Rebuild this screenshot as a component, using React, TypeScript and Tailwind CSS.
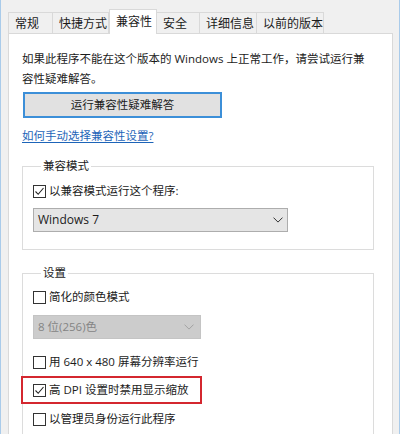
const tabs = [
  { label: "常规", w: "w-[45px]" },
  { label: "快捷方式", w: "w-[57px]" },
  { label: "兼容性", w: "w-[48px]", active: true },
  { label: "安全", w: "w-[44px]" },
  { label: "详细信息", w: "w-[58px]" },
  { label: "以前的版本", w: "w-[68px]" },
];

const CheckBox = ({ checked }: { checked?: boolean }) => (
  <span className="flex h-[13px] w-[13px] shrink-0 items-center justify-center border border-[#333333] bg-white">
    {checked && (
      <svg width="11" height="11" viewBox="0 0 11 11">
        <polyline
          points="1.5,5.5 4.2,8.3 9.5,2"
          fill="none"
          stroke="#222222"
          strokeWidth="1.1"
        />
      </svg>
    )}
  </span>
);

const CheckRow = ({ label, checked }: { label: string; checked?: boolean }) => (
  <div className="flex h-[20px] items-center gap-x-[3px]">
    <CheckBox checked={checked} />
    <span>{label}</span>
  </div>
);

const Chevron = ({ color }: { color: string }) => (
  <svg width="10" height="6" viewBox="0 0 10 6">
    <polyline
      points="0.5,0.6 5,5.1 9.5,0.6"
      fill="none"
      stroke={color}
      strokeWidth="1"
    />
  </svg>
);

export default function App() {
  return (
    <div
      className="h-[434px] w-[400px] overflow-hidden border-x border-[#a9cbea] bg-[#f0f0f0] text-[11.5px] leading-[20px] text-[#1b1b1b]"
      style={{ fontFamily: '"Open Sans", "Noto Sans CJK SC", sans-serif' }}
    >
      {/* tabs */}
      <div className="flex h-[33px] items-end pl-[7px] text-[12px]">
        {tabs.map((t) =>
          t.active ? (
            <div
              key={t.label}
              className={`${t.w} relative z-10 -mb-px h-[25px] border border-b-0 border-[#d9d9d9] bg-white pl-[6px] pt-[2px]`}
            >
              {t.label}
            </div>
          ) : (
            <div
              key={t.label}
              className={`${t.w} -ml-px h-[21px] border border-b-0 border-[#d9d9d9] bg-[#f0f0f0] pl-[6px] pt-[1px] first:ml-0`}
            >
              {t.label}
            </div>
          ),
        )}
      </div>

      {/* panel */}
      <div className="ml-[7px] h-[420px] w-[385px] border border-[#d9d9d9] bg-white pl-[13px] pt-[15px]">
        <p>
          如果此程序不能在这个版本的 Windows 上正常工作，请尝试运行兼
          <br />
          容性疑难解答。
        </p>

        <button className="ml-px mt-[3px] h-[26px] w-[199px] border-2 border-[#3c8fd8] bg-[#e1e1e1] text-center">
          运行兼容性疑难解答
        </button>

        <div className="mt-[8px]">
          <a className="text-[#1d64b8] underline underline-offset-2">
            如何手动选择兼容性设置?
          </a>
        </div>

        <fieldset className="mt-[10px] w-[352px] border border-[#dcdcdc] pb-[17px] pl-[10px]">
          <legend className="ml-[8px] px-[2px]">兼容模式</legend>
          <div className="mt-[5px]">
            <CheckRow label="以兼容模式运行这个程序:" checked />
          </div>
          <div className="mt-[7px] flex h-[24px] w-[255px] items-center justify-between border border-[#adadad] bg-[#e5e5e5] pl-[4px] pr-[4px] text-[12px]">
            <span>Windows 7</span>
            <Chevron color="#333333" />
          </div>
        </fieldset>

        <fieldset className="mt-[13px] h-[200px] w-[352px] border border-[#dcdcdc] pl-[10px]">
          <legend className="ml-[8px] px-[2px]">设置</legend>
          <div className="mt-[4px]">
            <CheckRow label="简化的颜色模式" />
          </div>
          <div className="mt-[8px] flex h-[24px] w-[168px] items-center justify-between border border-[#c4c4c4] bg-[#cccccc] pl-[4px] pr-[6px] text-[#848484]">
            <span>8 位(256)色</span>
            <Chevron color="#a3a3a3" />
          </div>
          <div className="mt-[13px]">
            <CheckRow label="用 640 x 480 屏幕分辨率运行" />
          </div>
          <div className="-ml-[12px] mt-[4px] w-[181px] border-2 border-[#d4272f] py-[2px] pl-[10px]">
            <CheckRow label="高 DPI 设置时禁用显示缩放" checked />
          </div>
          <div className="mt-[5px]">
            <CheckRow label="以管理员身份运行此程序" />
          </div>
        </fieldset>
      </div>
    </div>
  );
}
